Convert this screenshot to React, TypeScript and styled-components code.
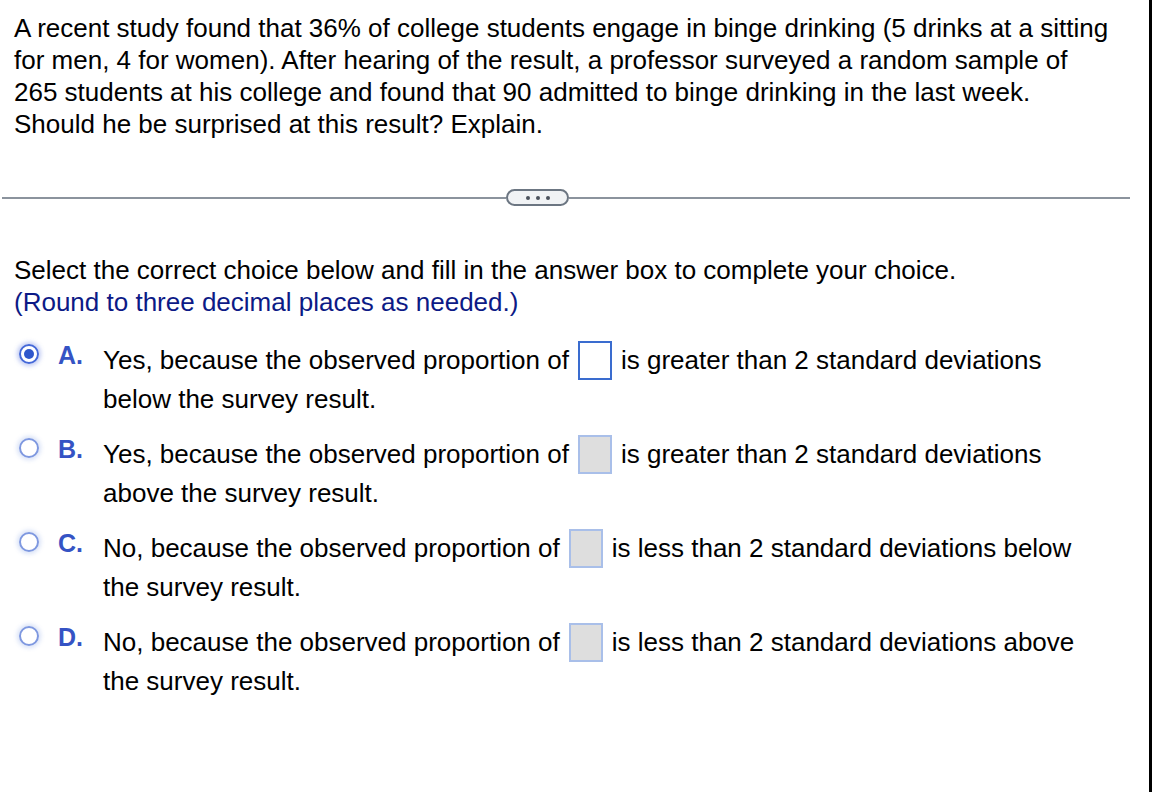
import React from "react";
import styled, { createGlobalStyle } from "styled-components";

const Global = createGlobalStyle`
  html, body { margin: 0; padding: 0; background: #fff; }
  body { font-family: "Liberation Sans", Arial, Helvetica, sans-serif; color: #000; }
`;

const Page = styled.div`
  width: 1149px;
  height: 792px;
  border-right: 3px solid #000;
  box-sizing: content-box;
  overflow: hidden;
`;

const Intro = styled.p`
  margin: 0;
  padding: 12px 0 0 14px;
  font-size: 26px;
  line-height: 32px;
  white-space: nowrap;
`;

const DividerRow = styled.div`
  margin: 49px 0 0 2px;
  width: 1128px;
  height: 17px;
  display: flex;
  align-items: center;
`;

const Rule = styled.div<{ $w?: number }>`
  ${(p) => (p.$w ? `width: ${p.$w}px;` : "flex: 1;")}
  height: 2px;
  background: #8b939d;
`;

const Pill = styled.div`
  width: 59px;
  height: 13px;
  border: 2px solid #6c7682;
  border-radius: 9px;
  background: #f1f3f5;
  display: flex;
  align-items: center;
  justify-content: center;
  gap: 6px;
`;

const Dot = styled.span`
  width: 4px;
  height: 4px;
  border-radius: 50%;
  background: #4b525c;
`;

const Instructions = styled.div`
  margin-top: 48px;
  padding-left: 14px;
  font-size: 26px;
  line-height: 32px;
`;

const Hint = styled.div`
  color: #0c1a86;
`;

const Options = styled.div`
  margin-top: 23px;
  display: flex;
  flex-direction: column;
  gap: 16px;
`;

const Option = styled.div`
  display: flex;
  align-items: flex-start;
`;

const RadioCell = styled.div`
  width: 58px;
  display: flex;
  padding-left: 19px;
  box-sizing: border-box;
  padding-top: 3px;
`;

const Radio = styled.span<{ $checked?: boolean }>`
  width: 20px;
  height: 20px;
  border-radius: 50%;
  box-sizing: border-box;
  border: 2px solid ${(p) => (p.$checked ? "#4468d8" : "#7e98e0")};
  box-shadow: 0 0 4px 2px ${(p) => (p.$checked ? "rgba(80,110,220,0.35)" : "rgba(120,150,225,0.28)")};
  display: flex;
  align-items: center;
  justify-content: center;
  &::after {
    content: "";
    display: ${(p) => (p.$checked ? "block" : "none")};
    width: 10px;
    height: 10px;
    border-radius: 50%;
    background: #2f57cc;
  }
`;

const Letter = styled.span`
  width: 45px;
  font-size: 25px;
  font-weight: 700;
  color: #3553c4;
  line-height: 28px;
`;

const Body = styled.div`
  font-size: 26px;
  line-height: 39px;
  white-space: nowrap;
`;

const AnswerBox = styled.span<{ $active?: boolean }>`
  display: inline-block;
  vertical-align: middle;
  width: 34px;
  height: 39px;
  box-sizing: border-box;
  margin: -4px 9px 0 9px;
  border: 2px solid ${(p) => (p.$active ? "#3a6ccf" : "#a9bfe9")};
  background: ${(p) => (p.$active ? "#fff" : "#dedede")};
`;

const items = [
  { letter: "A.", pre: "Yes, because the observed proportion of", post: "is greater than 2 standard deviations", line2: "below the survey result.", checked: true },
  { letter: "B.", pre: "Yes, because the observed proportion of", post: "is greater than 2 standard deviations", line2: "above the survey result." },
  { letter: "C.", pre: "No, because the observed proportion of", post: "is less than 2 standard deviations below", line2: "the survey result." },
  { letter: "D.", pre: "No, because the observed proportion of", post: "is less than 2 standard deviations above", line2: "the survey result." },
];

export default function App() {
  return (
    <Page>
      <Global />
      <Intro>
        A recent study found that 36% of college students engage in binge drinking (5 drinks at a sitting
        <br />
        for men, 4 for women). After hearing of the result, a professor surveyed a random sample of
        <br />
        265 students at his college and found that 90 admitted to binge drinking in the last week.
        <br />
        Should he be surprised at this result? Explain.
      </Intro>
      <DividerRow>
        <Rule $w={504} />
        <Pill>
          <Dot />
          <Dot />
          <Dot />
        </Pill>
        <Rule />
      </DividerRow>
      <Instructions>
        <div>Select the correct choice below and fill in the answer box to complete your choice.</div>
        <Hint>(Round to three decimal places as needed.)</Hint>
      </Instructions>
      <Options>
        {items.map((it) => (
          <Option key={it.letter}>
            <RadioCell>
              <Radio $checked={it.checked} />
            </RadioCell>
            <Letter>{it.letter}</Letter>
            <Body>
              {it.pre}
              <AnswerBox $active={it.checked} />
              {it.post}
              <br />
              {it.line2}
            </Body>
          </Option>
        ))}
      </Options>
    </Page>
  );
}
